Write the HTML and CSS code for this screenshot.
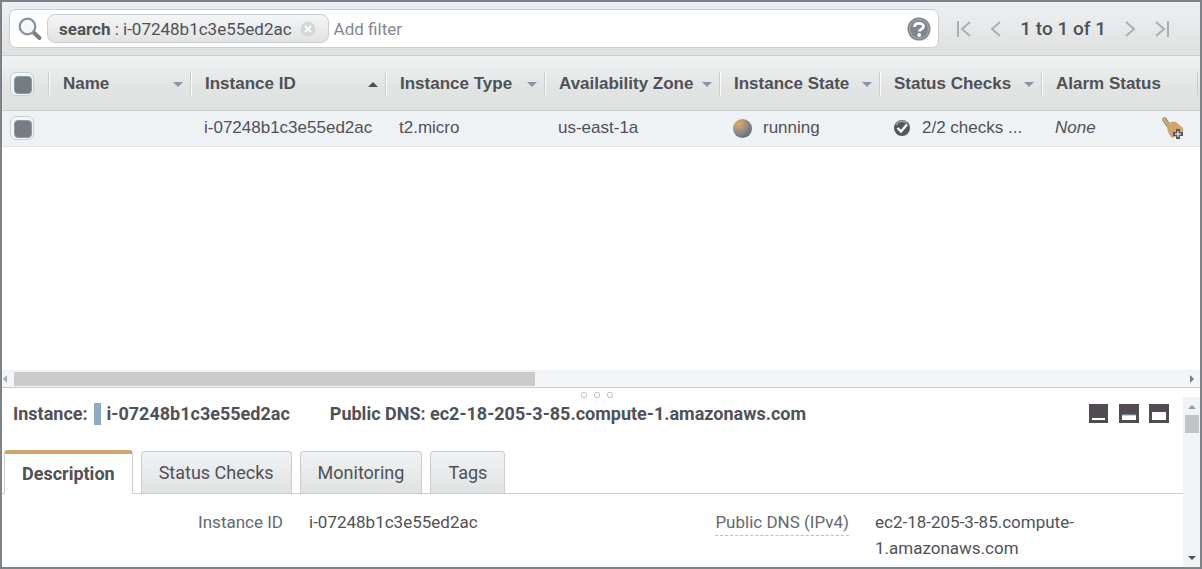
FILE: index.html
```html
<!DOCTYPE html>
<html lang="en">
<head>
<meta charset="utf-8">
<title>Instances</title>
<link rel="stylesheet" href="styles.css">
</head>
<body>
<main class="console">
  <header class="toolbar">
    <div class="search">
      <svg class="search-icon" width="26" height="26" viewBox="0 0 26 26" fill="none" aria-hidden="true">
        <path d="M16 16l6.500 6" stroke="#777b82" stroke-width="4" stroke-linecap="round"/>
        <circle cx="10.500" cy="10.500" r="7.800" fill="#f4f7f9" stroke="#84909c" stroke-width="2.200"/>
      </svg>
      <span class="chip"><span><b>search</b> : i-07248b1c3e55ed2ac</span>
        <button class="plain" aria-label="Remove filter">
          <svg width="16" height="16" viewBox="0 0 16 16" aria-hidden="true"><circle cx="8" cy="8" r="7.500" fill="#d6d8d8"/><path d="M5 5l6 6M11 5l-6 6" stroke="#f6f7f7" stroke-width="2.200"/></svg>
        </button>
      </span>
      <input class="filter" type="text" placeholder="Add filter" aria-label="Add filter">
      <button class="plain" aria-label="Help">
        <svg width="24" height="24" viewBox="0 0 24 24" fill="none" aria-hidden="true"><circle cx="12" cy="12" r="11.500" fill="#7f868e"/><circle cx="12" cy="12" r="9.500" stroke="#a9aeb3" stroke-width="1"/><path d="M7.500 10C7.500 5.300 16.500 5.300 16.500 9.600c0 2.700-4.300 2.400-4.300 5" stroke="#fff" stroke-width="2.800"/><circle cx="12.200" cy="18" r="1.900" fill="#fff"/></svg>
      </button>
    </div>
    <nav class="pager" aria-label="Pages">
      <button class="plain" aria-label="First page"><svg width="16" height="18" viewBox="0 0 16 18" aria-hidden="true"><path d="M2 1v16M14 2L6 9l8 7"/></svg></button>
      <button class="plain" aria-label="Previous page"><svg width="12" height="18" viewBox="0 0 12 18" aria-hidden="true"><path d="M10 2L2 9l8 7"/></svg></button>
      <span class="pager-text">1 to 1 of 1</span>
      <button class="plain" aria-label="Next page"><svg width="12" height="18" viewBox="0 0 12 18" aria-hidden="true"><path d="M2 2l8 7-8 7"/></svg></button>
      <button class="plain" aria-label="Last page"><svg width="16" height="18" viewBox="0 0 16 18" aria-hidden="true"><path d="M2 2l8 7-8 7M14 1v16"/></svg></button>
    </nav>
  </header>

  <section class="list">
    <table class="instances">
      <colgroup>
        <col class="c-check"><col class="c-name"><col class="c-id"><col class="c-type"><col class="c-zone"><col class="c-state"><col class="c-status"><col>
      </colgroup>
      <thead>
        <tr>
          <th><input class="check" type="checkbox" checked aria-label="Select all"></th>
          <th><button class="sort">Name<i class="arrow"></i></button></th>
          <th><button class="sort">Instance ID<i class="arrow up"></i></button></th>
          <th><button class="sort">Instance Type<i class="arrow"></i></button></th>
          <th><button class="sort">Availability Zone<i class="arrow"></i></button></th>
          <th><button class="sort">Instance State<i class="arrow"></i></button></th>
          <th><button class="sort">Status Checks<i class="arrow"></i></button></th>
          <th><button class="sort">Alarm Status</button></th>
        </tr>
      </thead>
      <tbody>
        <tr>
          <td><input class="check" type="checkbox" checked aria-label="Select i-07248b1c3e55ed2ac"></td>
          <td></td>
          <td>i-07248b1c3e55ed2ac</td>
          <td>t2.micro</td>
          <td>us-east-1a</td>
          <td><span class="with-icon"><i class="ball"></i>running</span></td>
          <td><span class="with-icon status"><svg width="18" height="18" viewBox="0 0 18 18" fill="none" aria-hidden="true"><circle cx="9" cy="9" r="8" fill="#55565d"/><path d="M3 6a7 7 0 0 1 11-2" stroke="#92979e" stroke-width="2"/><path d="M4.500 9l3.500 3.500 6-7" stroke="#fff" stroke-width="2.400"/></svg>2/2 checks ...</span></td>
          <td><span class="alarm"><em>None</em>
            <button class="plain" aria-label="Add alarm">
              <svg width="24" height="24" viewBox="0 0 24 24" fill="none" aria-hidden="true"><path d="M3.500 3.500l4 6" stroke="#77777a" stroke-width="4.500" stroke-linecap="round"/><path d="M3 3l4.500 6" stroke="#cca872" stroke-width="3" stroke-linecap="round"/><path d="M6 9c2-3 6-4 9-3l7 6c1 3-1 5-3 7l-8 3c-3-3-5-7-5-13z" fill="#cda66c"/><path d="M15 13h4v3h3v4h-3v3h-4v-3h-3v-4h3z" fill="#55565d"/><path d="M17 15v6M14 18h6" stroke="#d7dadc" stroke-width="1.400"/></svg>
            </button></span></td>
        </tr>
      </tbody>
    </table>
    <div class="hscroll"><i class="tri left"></i><div class="htrack"><div class="hthumb"></div></div><i class="tri right"></i></div>
  </section>

  <section class="details">
    <div class="panel">
      <div class="grip"><i></i><i></i><i></i></div>
      <div class="title">
        <h2>Instance: <i class="bar"></i>i-07248b1c3e55ed2ac</h2>
        <h2>Public DNS: ec2-18-205-3-85.compute-1.amazonaws.com</h2>
        <div class="sizes">
          <button class="plain" aria-label="Minimize panel"><svg width="20" height="20" viewBox="0 0 20 20" aria-hidden="true"><path d="M0 0h19v19H0z" fill="#504c52"/><path d="M3 14h13v2H3z" fill="#fff"/></svg></button>
          <button class="plain" aria-label="Half panel"><svg width="20" height="20" viewBox="0 0 20 20" aria-hidden="true"><path d="M0 0h20v19H0z" fill="#504c52"/><path d="M3 11h14v5H3z" fill="#fff"/><path d="M3 11h14" stroke="#91aec8"/></svg></button>
          <button class="plain" aria-label="Maximize panel"><svg width="20" height="20" viewBox="0 0 20 20" aria-hidden="true"><path d="M0 0h20v19H0z" fill="#504c52"/><path d="M3 8h14v8H3z" fill="#fff"/></svg></button>
        </div>
      </div>
      <div class="tabs" role="tablist">
        <button class="tab active" role="tab" aria-selected="true">Description</button>
        <button class="tab" role="tab">Status Checks</button>
        <button class="tab" role="tab">Monitoring</button>
        <button class="tab" role="tab">Tags</button>
      </div>
      <div class="fields">
        <dl><dt>Instance ID</dt><dd>i-07248b1c3e55ed2ac</dd></dl>
        <dl><dt><span class="hint">Public DNS (IPv4)</span></dt><dd>ec2-18-205-3-85.compute-<wbr>1.amazonaws.com</dd></dl>
      </div>
    </div>
    <div class="vscroll"><i class="tri top"></i><div class="vthumb"></div><i class="tri bottom"></i></div>
  </section>
</main>
</body>
</html>
```
FILE: styles.css
```css
* { box-sizing: border-box; }
body { margin: 0; font: 17px/26px Roboto, sans-serif; color: #505157; background: #fff; }
button, input { font: inherit; color: inherit; margin: 0; }
button { cursor: pointer; }
.plain { display: flex; padding: 0; border: 0; background: none; }

.console { display: flex; flex-direction: column; min-height: 100vh; border: 2px solid #7e8187; }

.toolbar { display: flex; align-items: center; gap: 17px; height: 54px; padding: 0 30px 0 7px; background: linear-gradient(#edf0f2, #dfe1e0); border-bottom: 1px solid #cbcdcc; }
.search { display: flex; flex: 1; align-items: center; gap: 4px; height: 39px; padding: 0 7px; background: #fff; border: 1px solid #cbcdcd; border-radius: 7px; }
.chip { display: flex; align-items: center; gap: 8px; height: 29px; padding: 0 12px 0 11px; border: 1px solid #cbced0; border-radius: 8px; background: linear-gradient(#f3f5f6, #e1e3e3); white-space: nowrap; }
.filter { flex: 1; min-width: 0; padding: 0 1px; border: 0; outline: 0; background: none; }
.filter::placeholder { color: #85888e; opacity: 1; }
.pager { display: flex; align-items: center; gap: 18px; }
.pager svg { fill: none; stroke: #a8afb6; stroke-width: 2; }
.pager-text { font-size: 19px; font-weight: 500; white-space: nowrap; }

.list { display: flex; flex: 1; flex-direction: column; min-height: 332px; }
.instances { width: 100%; table-layout: fixed; border-collapse: collapse; font-family: "Liberation Sans", Arial, sans-serif; }
.c-check { width: 46px; }
.c-name { width: 142px; }
.c-id { width: 195px; }
.c-type { width: 159px; }
.c-zone { width: 175px; }
.c-state { width: 160px; }
.c-status { width: 162px; }
.instances thead { background: linear-gradient(#f0f3f5, #e2e4e3 60%, #dfe1e0); }
.instances tr { border-bottom: 1px solid #cfd1d0; }
.instances th { height: 54px; padding: 3px 0 0; text-align: left; }
.instances td { height: 36px; padding: 0 0 0 14px; white-space: nowrap; }
.instances tbody { background: #eff2f5; }
.instances tbody tr { border-color: #e0e3e4; }
.instances th:first-child, .instances td:first-child { padding-left: 8px; }
.sort { display: flex; align-items: center; justify-content: space-between; width: 100%; height: 24px; padding: 0 7px 0 14px; border: 0; border-left: 1px solid #cbcdcd; background: none; box-shadow: inset 1px 0 #fafbfb; font-weight: 700; white-space: nowrap; }
.instances th:last-child { padding-right: 2px; }
.instances th:last-child .sort { border-right: 1px solid #cbcdcd; }
.arrow { border: 5px solid transparent; border-top-color: #8797a6; border-bottom: 0; }
.arrow.up { border-top: 0; border-bottom: 5px solid #505157; }
.check { display: block; appearance: none; width: 24px; height: 24px; border: 1px solid #cbcdd0; border-radius: 6px; background: #f3f5f7; padding: 3px; }
.check:checked::before { content: ""; display: block; width: 16px; height: 16px; border: 1px solid #879bad; border-radius: 4px; background: #777b82; }
.with-icon { display: flex; align-items: center; gap: 11px; }
.ball { width: 19px; height: 19px; border-radius: 50%; background: radial-gradient(circle at 30% 25%, #d2a569 10%, #85868a 52%, #55565d 100%); }
.alarm { display: flex; align-items: center; justify-content: space-between; padding-right: 15px; }

.hscroll { display: flex; align-items: center; height: 18px; margin-top: auto; padding: 0 6px 0 1px; gap: 7px; border-top: 1px solid #edf0f2; border-bottom: 1px solid #c7caca; background: #f3f5f7; }
.htrack { flex: 1; height: 14px; }
.hthumb { width: 44.6%; height: 14px; background: #cbcbc9; }
.tri { flex: none; border: 4px solid transparent; }
.left { border-left-width: 0; border-right-color: #a8adb2; }
.right { border-right-width: 0; border-left-color: #777b82; }
.top { border-top-width: 0; border-bottom-color: #91a0ae; }
.bottom { border-bottom-width: 0; border-top-color: #505157; }

.details { display: flex; min-height: 179px; }
.panel { flex: 1; min-width: 0; }
.grip { display: flex; justify-content: center; gap: 7px; height: 12px; padding: 4px 0 0 8px; }
.grip i { width: 6px; height: 6px; border: 1px solid #c3c6c7; border-radius: 2px; }
.title { display: flex; align-items: center; gap: 40px; padding: 1px 14px 0 11px; }
.title h2 { display: flex; align-items: center; gap: 6px; margin: 0; font-size: 18px; font-weight: 700; line-height: 26px; white-space: nowrap; }
.bar { width: 7px; height: 22px; background: #8faac3; }
.sizes { display: flex; gap: 10px; margin-left: auto; }
.tabs { display: flex; align-items: flex-end; gap: 8px; height: 44px; margin-top: 23px; padding-left: 2px; border-bottom: 1px solid #cbcdcd; }
.tab { height: 42px; padding: 0 17px; border: 1px solid #cbcdcd; border-bottom: 0; border-radius: 4px 4px 0 0; background: linear-gradient(#f0f3f5, #e0e2e2); font-size: 18px; white-space: nowrap; }
.tab.active { height: 44px; margin-bottom: -1px; border-top: 4px solid #cda66c; background: #fff; font-weight: 700; }
.fields { display: grid; grid-template-columns: 1fr 1fr; padding: 15px 38px 0 11px; }
.fields dl { display: grid; grid-template-columns: 1fr 1fr; gap: 26px; margin: 0; }
.fields dt { text-align: right; color: #65686f; white-space: nowrap; }
.fields dd { margin: 0; }
.hint { display: inline-block; border-bottom: 1px dashed #bdc0c2; }
.vscroll { display: flex; flex-direction: column; align-items: center; width: 17px; margin-top: 9px; padding: 8px 0 7px; background: #f1f3f5; }
.vthumb { width: 14px; height: 18px; margin: 6px 0 auto; background: #c1c3c4; }
```
